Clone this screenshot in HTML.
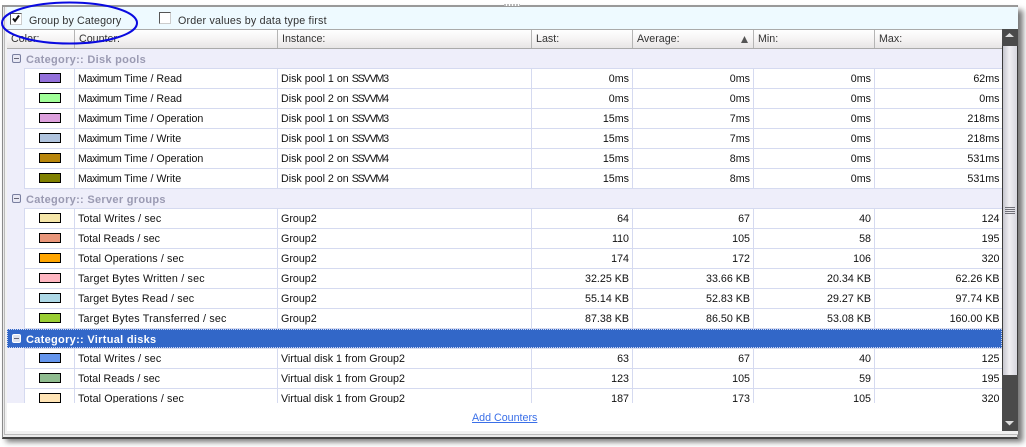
<!DOCTYPE html>
<html><head><meta charset="utf-8">
<style>
html,body{margin:0;padding:0;width:1026px;height:447px;overflow:hidden;background:#fff;font-family:"Liberation Sans",sans-serif;font-size:10.7px;color:#111}
div{position:absolute;box-sizing:border-box}
#shadow{left:6px;top:10px;width:1017px;height:432px;background:#777;filter:blur(3px)}
#panel{left:2px;top:5px;width:1016px;height:434px;background:#eaeaea;border:1px solid #8a8a8a;border-top:2px solid #999;border-bottom:2px solid #444}
#line{left:4px;top:7px;width:1014px;height:428px;border:1px solid #bbb;border-top:0;border-right:0;background:#f1f1f1}
#inner{left:7px;top:7px;width:1010px;height:424px;background:#fff}
#top{left:7px;top:7px;width:1011px;height:22px;background:#eefaff}
.t{position:absolute;white-space:nowrap}
.cb{left:10px;top:13px;width:12px;height:12px;background:#fff;border:1px solid;border-color:#555 #ccc #ccc #555}
#hdr{left:7px;top:29px;width:995px;height:20px;background:linear-gradient(#fff,#f6f4f4 50%,#e7e5e5);border-top:1px solid #aaa;border-bottom:1px solid #aaa}
.hc{position:absolute;top:0;height:18px;border-left:1px solid #b5b5b5;padding:3px 0 0 4px;color:#333;white-space:nowrap}
#wrap{left:7px;top:49px;width:995px;height:354px;overflow:hidden;background:#eeeefa}
table{position:absolute;left:17px;top:0;border-collapse:collapse;table-layout:fixed;width:978px}
td{height:19px;padding:0 3px 0 3px;border:1px solid #d5daf0;border-width:0 0 1px 1px;background:#fff;white-space:nowrap;overflow:hidden;line-height:18px}
td.n{text-align:right;padding-right:3px}
td.w{letter-spacing:.2px}
td.v{letter-spacing:.12px}
i{font-style:normal}
i.x{letter-spacing:-1.2px}
i.m{letter-spacing:-.42px}
tr.g td{background:#eeeefa;height:19px;border:0;border-bottom:1px solid #d5daf0;padding:0;overflow:visible}
td.s{position:relative}
.sw{left:14px;top:4px;width:22px;height:10px;border:1px solid #000}
.b{font-weight:bold;color:#9a9ab2;letter-spacing:.3px;font-size:11px}
.pm{left:12px;width:9px;height:9px;border:1px solid #7a7fa0;border-radius:2px;background:#e8e8f4}
.pm:after{content:"";position:absolute;left:1px;top:3px;width:5px;height:1px;background:#667}
#sb{left:1002px;top:29px;width:16px;height:402px;background:#4a4a4a}
#sbt{left:1002px;top:46px;width:16px;height:329px;background:linear-gradient(90deg,#c6c6ce,#f0eff3 45%,#d6d6de);border:1px solid #3b3b3b;border-width:0 1px}
.gr{left:1005px;width:10px;height:1px;background:#707078}
</style></head><body>
<div id="shadow"></div>
<div id="panel"></div>
<div id="line"></div>
<div id="inner"></div>
<div style="left:504px;top:4px;width:16px;height:2px;background:repeating-linear-gradient(90deg,#bbb 0 2px,#fff 2px 3px)"></div>
<div id="top"></div>
<div class="cb"><svg width="10" height="10" style="position:absolute;left:0;top:0"><path d="M2 4.500L4 7L8 1.500" stroke="#111" stroke-width="2" fill="none"/></svg></div>
<span class="t" style="left:29px;top:15px;color:#333;letter-spacing:.12px">Group by Category</span>
<div class="cb" style="left:159px;top:12px"></div>
<span class="t" style="left:178px;top:15px;color:#333;letter-spacing:.2px">Order values by data type first</span>

<div id="hdr">
<div class="hc" style="left:0;width:67px;border:0">Color:</div>
<div class="hc" style="left:67px">Counter:</div>
<div class="hc" style="left:270px">Instance:</div>
<div class="hc" style="left:524px">Last:</div>
<div class="hc" style="left:625px;width:121px">Average:<svg width="9" height="8" style="position:absolute;left:107px;top:5px"><path d="M4.500 1L8 8H1Z" fill="#555"/></svg></div>
<div class="hc" style="left:746px">Min:</div>
<div class="hc" style="left:867px">Max:</div>
</div>

<div id="wrap">
<table>
<colgroup><col style="width:50px"><col style="width:203px"><col style="width:254px"><col style="width:101px"><col style="width:121px"><col style="width:121px"><col style="width:128px"></colgroup>
<tr class="g"><td colspan="7"></td></tr>
<tr><td class="s"><div class="sw" style="background:#9370db"></div></td><td><i class="m">Maximum</i> Time / Read</td><td>Disk pool 1 on <i class="x">SSVVM3</i></td><td class="n">0ms</td><td class="n">0ms</td><td class="n">0ms</td><td class="n">62ms</td></tr>
<tr><td class="s"><div class="sw" style="background:#a0ff98"></div></td><td><i class="m">Maximum</i> Time / Read</td><td>Disk pool 2 on <i class="x">SSVVM4</i></td><td class="n">0ms</td><td class="n">0ms</td><td class="n">0ms</td><td class="n">0ms</td></tr>
<tr><td class="s"><div class="sw" style="background:#dda0dd"></div></td><td><i class="m">Maximum</i> Time / Operation</td><td>Disk pool 1 on <i class="x">SSVVM3</i></td><td class="n">15ms</td><td class="n">7ms</td><td class="n">0ms</td><td class="n">218ms</td></tr>
<tr><td class="s"><div class="sw" style="background:#b0c4de"></div></td><td><i class="m">Maximum</i> Time / Write</td><td>Disk pool 1 on <i class="x">SSVVM3</i></td><td class="n">15ms</td><td class="n">7ms</td><td class="n">0ms</td><td class="n">218ms</td></tr>
<tr><td class="s"><div class="sw" style="background:#b8860b"></div></td><td><i class="m">Maximum</i> Time / Operation</td><td>Disk pool 2 on <i class="x">SSVVM4</i></td><td class="n">15ms</td><td class="n">8ms</td><td class="n">0ms</td><td class="n">531ms</td></tr>
<tr><td class="s"><div class="sw" style="background:#808000"></div></td><td><i class="m">Maximum</i> Time / Write</td><td>Disk pool 2 on <i class="x">SSVVM4</i></td><td class="n">15ms</td><td class="n">8ms</td><td class="n">0ms</td><td class="n">531ms</td></tr>
<tr class="g"><td colspan="7"></td></tr>
<tr><td class="s"><div class="sw" style="background:#f5e6a8"></div></td><td class="v">Total Writes / sec</td><td>Group2</td><td class="n">64</td><td class="n">67</td><td class="n">40</td><td class="n">124</td></tr>
<tr><td class="s"><div class="sw" style="background:#e9967a"></div></td><td>Total Reads / sec</td><td>Group2</td><td class="n">110</td><td class="n">105</td><td class="n">58</td><td class="n">195</td></tr>
<tr><td class="s"><div class="sw" style="background:#ffa500"></div></td><td class="v">Total Operations / sec</td><td>Group2</td><td class="n">174</td><td class="n">172</td><td class="n">106</td><td class="n">320</td></tr>
<tr><td class="s"><div class="sw" style="background:#ffb6c1"></div></td><td class="w">Target Bytes Written / sec</td><td>Group2</td><td class="n">32.25 KB</td><td class="n">33.66 KB</td><td class="n">20.34 KB</td><td class="n">62.26 KB</td></tr>
<tr><td class="s"><div class="sw" style="background:#add8e6"></div></td><td class="v">Target Bytes Read / sec</td><td>Group2</td><td class="n">55.14 KB</td><td class="n">52.83 KB</td><td class="n">29.27 KB</td><td class="n">97.74 KB</td></tr>
<tr><td class="s"><div class="sw" style="background:#9acd32"></div></td><td class="w">Target Bytes Transferred / sec</td><td>Group2</td><td class="n">87.38 KB</td><td class="n">86.50 KB</td><td class="n">53.08 KB</td><td class="n">160.00 KB</td></tr>
<tr class="g"><td colspan="7"></td></tr>
<tr><td class="s"><div class="sw" style="background:#6495ed"></div></td><td class="v">Total Writes / sec</td><td>Virtual disk 1 from Group2</td><td class="n">63</td><td class="n">67</td><td class="n">40</td><td class="n">125</td></tr>
<tr><td class="s"><div class="sw" style="background:#8fbc8f"></div></td><td>Total Reads / sec</td><td>Virtual disk 1 from Group2</td><td class="n">123</td><td class="n">105</td><td class="n">59</td><td class="n">195</td></tr>
<tr><td class="s"><div class="sw" style="background:#ffe4b5"></div></td><td class="v">Total Operations / sec</td><td>Virtual disk 1 from Group2</td><td class="n">187</td><td class="n">173</td><td class="n">105</td><td class="n">320</td></tr>
</table>
</div>

<div class="pm" style="top:54px"></div>
<span class="t b" style="left:26px;top:54px">Category:: Disk pools</span>
<div class="pm" style="top:194px"></div>
<span class="t b" style="left:26px;top:194px">Category:: Server groups</span>
<div style="left:7px;top:329px;width:995px;height:19px;background:#3267c8;border:1px dotted #cfd8f0"></div>
<div class="pm" style="top:334px;background:#dfe3ee;border-color:#fff"></div>
<span class="t b" style="left:26px;top:334px;color:#fff">Category:: Virtual disks</span>

<div id="sb"></div>
<div id="sbt"></div>
<svg width="16" height="10" style="position:absolute;left:1002px;top:31px"><path d="M3 6L7.500 2L12 6Z" fill="#ddd"/></svg>
<svg width="16" height="10" style="position:absolute;left:1002px;top:420px"><path d="M3 1L7.500 5.500L12 1Z" fill="#ddd"/></svg>
<div class="gr" style="top:207px"></div><div class="gr" style="top:209px"></div><div class="gr" style="top:211px"></div><div class="gr" style="top:213px"></div>

<span class="t" style="left:472px;top:412px;color:#3a6fe8;text-decoration:underline">Add Counters</span>

<svg width="150" height="50" style="position:absolute;left:0;top:0"><ellipse cx="69.500" cy="23" rx="67.500" ry="20.500" fill="none" stroke="#0a0ae0" stroke-width="2"/></svg>
</body></html>
